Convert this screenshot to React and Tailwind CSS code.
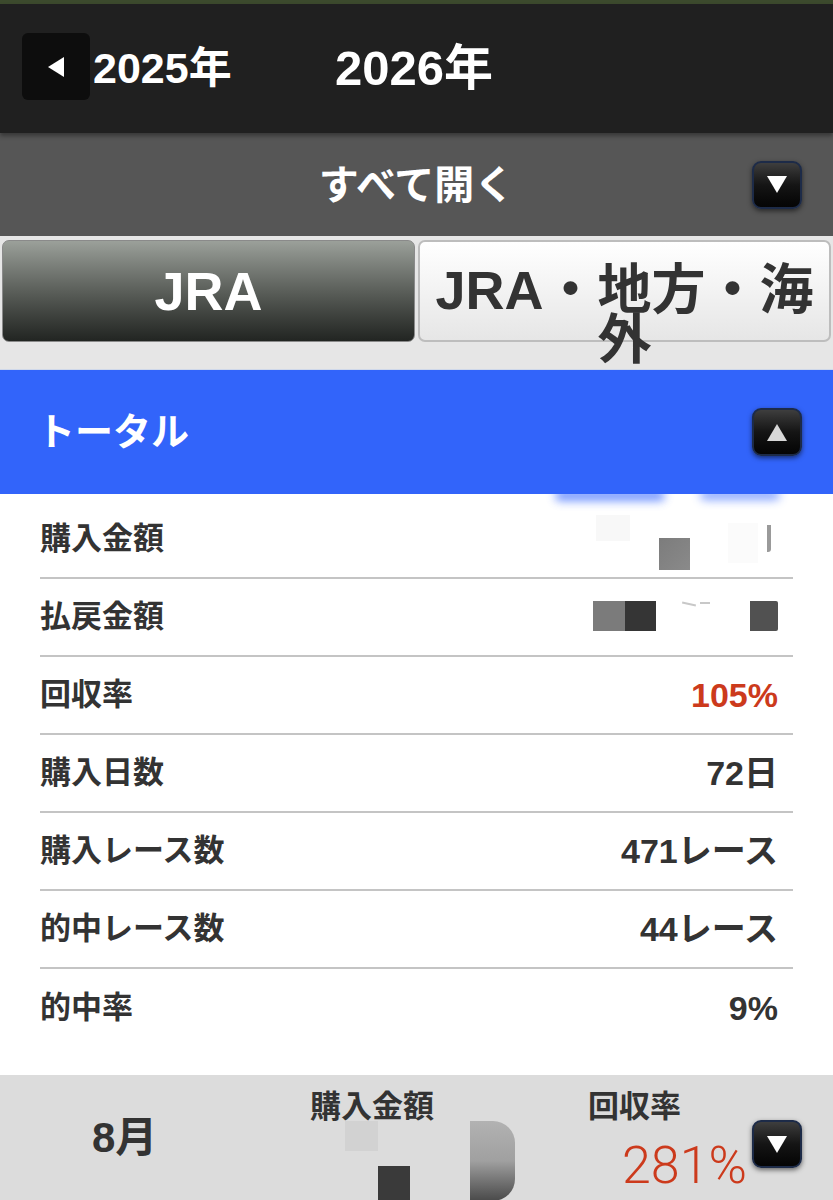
import React from "react";

// 収支画面（年別・トータル）
const rows = [
  { label: "購入金額", value: "masked1" },
  { label: "払戻金額", value: "masked2" },
  { label: "回収率", value: "105%", red: true },
  { label: "購入日数", value: "72日" },
  { label: "購入レース数", value: "471レース" },
  { label: "的中レース数", value: "44レース" },
  { label: "的中率", value: "9%" },
];

const ArrowBtn = ({ dir = "down" }) => (
  <div className="w-[50px] h-[48px] rounded-[9px] bg-gradient-to-b from-[#3e3e3e] via-[#151515] to-[#050505] border-2 border-[#1d2b48] shadow-[0_2px_5px_rgba(0,0,0,0.55)] flex items-center justify-center shrink-0">
    {dir === "down" ? (
      <svg width="22" height="19" viewBox="0 0 22 19">
        <path d="M1 1 H21 L11 18 Z" fill="#ffffff" />
      </svg>
    ) : (
      <svg width="22" height="19" viewBox="0 0 22 19">
        <path d="M11 1 L21 18 H1 Z" fill="#d8d8d8" />
      </svg>
    )}
  </div>
);

// モザイク部分
const Masked1 = () => (
  <div className="relative w-[200px] h-[60px]">
    <div className="absolute left-[18px] top-[6px] w-[34px] h-[26px] bg-[#f8f8f8]" />
    <div className="absolute left-[81px] top-[29px] w-[31px] h-[32px] bg-gradient-to-br from-[#7c7c7c] to-[#8a8a8a]" />
    <div className="absolute left-[150px] top-[14px] w-[30px] h-[40px] bg-[#fbfbfb]" />
    <div className="absolute left-[189px] top-[16px] w-[4px] h-[27px] bg-[#9a9a9a] rounded-br-[3px]" />
  </div>
);

const Masked2 = () => (
  <div className="relative w-[200px] h-[40px]">
    <div className="absolute left-[15px] top-[4px] w-[32px] h-[30px] bg-[#7b7b7b]" />
    <div className="absolute left-[47px] top-[4px] w-[31px] h-[30px] bg-[#353535]" />
    <div className="absolute left-[104px] top-[6px] w-[14px] h-[2px] bg-[#c8c8c8] rotate-12" />
    <div className="absolute left-[122px] top-[5px] w-[10px] h-[2px] bg-[#c8c8c8]" />
    <div className="absolute left-[172px] top-[4px] w-[28px] h-[30px] bg-[#515151] rounded-r-[2px]" />
  </div>
);

export default function App() {
  return (
    <div className="w-[833px] min-h-[1200px] bg-white overflow-hidden font-['Liberation_Sans','Noto_Sans_CJK_JP',sans-serif]">
      <div className="h-[4px] bg-[#3c4a2d]" />

      {/* 年切替 */}
      <div className="h-[129px] bg-[#202020] flex items-center pl-[22px] shadow-[0_3px_4px_rgba(0,0,0,0.35)] relative z-10">
        <div className="w-[68px] h-[67px] rounded-[6px] bg-[#0d0d0d] flex items-center justify-center mb-[4px]">
          <svg width="18" height="22" viewBox="0 0 18 22">
            <path d="M17 1 V21 L1 11 Z" fill="#ffffff" />
          </svg>
        </div>
        <span className="ml-[3px] w-[242px] text-white font-bold text-[43px]">2025年</span>
        <span className="text-white font-bold text-[49px]">2026年</span>
      </div>

      {/* すべて開く */}
      <div className="h-[103px] bg-[#565656] flex items-center px-[31px]">
        <div className="w-[50px]" />
        <div className="flex-1 text-center text-white font-bold text-[40px]">すべて開く</div>
        <ArrowBtn dir="down" />
      </div>

      {/* タブ */}
      <div className="h-[134px] bg-[#e6e6e6] flex gap-[3px] px-[2px] pt-[4px] border-b border-[#cfd8ea]">
        <div className="w-[413px] shrink-0 h-[102px] rounded-[7px] border border-[#8a8a8a] bg-gradient-to-b from-[#9ba09a] via-[#5b5f5a] to-[#222522] text-center pt-[25px]">
          <span className="text-white font-bold text-[54px] leading-[50px]">JRA</span>
        </div>
        <div className="w-[413px] shrink-0 h-[102px] rounded-[7px] border-2 border-[#bdbdbd] bg-gradient-to-b from-[#ffffff] to-[#e6e6e6] text-center pt-[24px] px-[10px]">
          <span className="text-[#333333] font-bold text-[54px] leading-[48px]">JRA・地方・海外</span>
        </div>
      </div>

      {/* トータル */}
      <div className="h-[124px] bg-[#3264fa] flex items-center justify-between pl-[37px] pr-[31px] relative z-10">
        <span className="text-white font-bold text-[38px]">トータル</span>
        <ArrowBtn dir="up" />
      </div>
      <div className="relative h-0">
        <div className="absolute left-[555px] top-[-4px] w-[110px] h-[11px] rounded-full bg-[#3a6bff] blur-[5px] opacity-70" />
        <div className="absolute left-[700px] top-[-4px] w-[80px] h-[10px] rounded-full bg-[#3a6bff] blur-[5px] opacity-60" />
      </div>

      <div className="pt-[7px] pb-[28px] px-[40px]">
        {rows.map((r, i) => (
          <div
            key={r.label}
            className={`h-[78px] flex items-center justify-between pr-[15px] ${i < rows.length - 1 ? "border-b-2 border-[#c4c4c4]" : ""}`}
          >
            <span className="text-[#333333] font-bold text-[31px]">{r.label}</span>
            {r.value === "masked1" ? (
              <Masked1 />
            ) : r.value === "masked2" ? (
              <Masked2 />
            ) : (
              <span className={`font-bold text-[34px] ${r.red ? "text-[#cc3a1c]" : "text-[#333333]"}`}>
                {r.value}
              </span>
            )}
          </div>
        ))}
      </div>

      {/* 月別 */}
      <div className="bg-[#dcdcdc] h-[160px] flex items-start pt-[9px] pl-[92px] pr-[31px]">
        <div className="w-[180px] pt-[22px] text-[#333333] font-bold text-[42px] leading-[63px]">8月</div>
        <div className="w-[200px] flex flex-col items-center">
          <span className="text-[#333333] font-bold text-[31px]">購入金額</span>
          <div className="relative w-[200px] h-[70px] mt-[-10px]">
            <div className="absolute left-[73px] top-[0px] w-[33px] h-[30px] bg-[#d2d2d2]" />
            <div className="absolute left-[106px] top-[45px] w-[32px] h-[35px] bg-[#3a3a3a]" />
            <div className="absolute left-[198px] top-[0px] w-[45px] h-[80px] rounded-r-[22px] bg-gradient-to-b from-[#b2b2b2] via-[#a0a0a0] to-[#4a4a4a]" />
          </div>
        </div>
        <div className="ml-[116px] w-[160px] flex flex-col">
          <span className="text-[#333333] font-bold text-[31px]">回収率</span>
          <span className="ml-[34px] mt-[7px] text-[#cc3a1c] text-[52px] leading-[56px] font-['Roboto',sans-serif] font-light">281%</span>
        </div>
        <div className="ml-auto mt-[36px]">
          <ArrowBtn dir="down" />
        </div>
      </div>
    </div>
  );
}
